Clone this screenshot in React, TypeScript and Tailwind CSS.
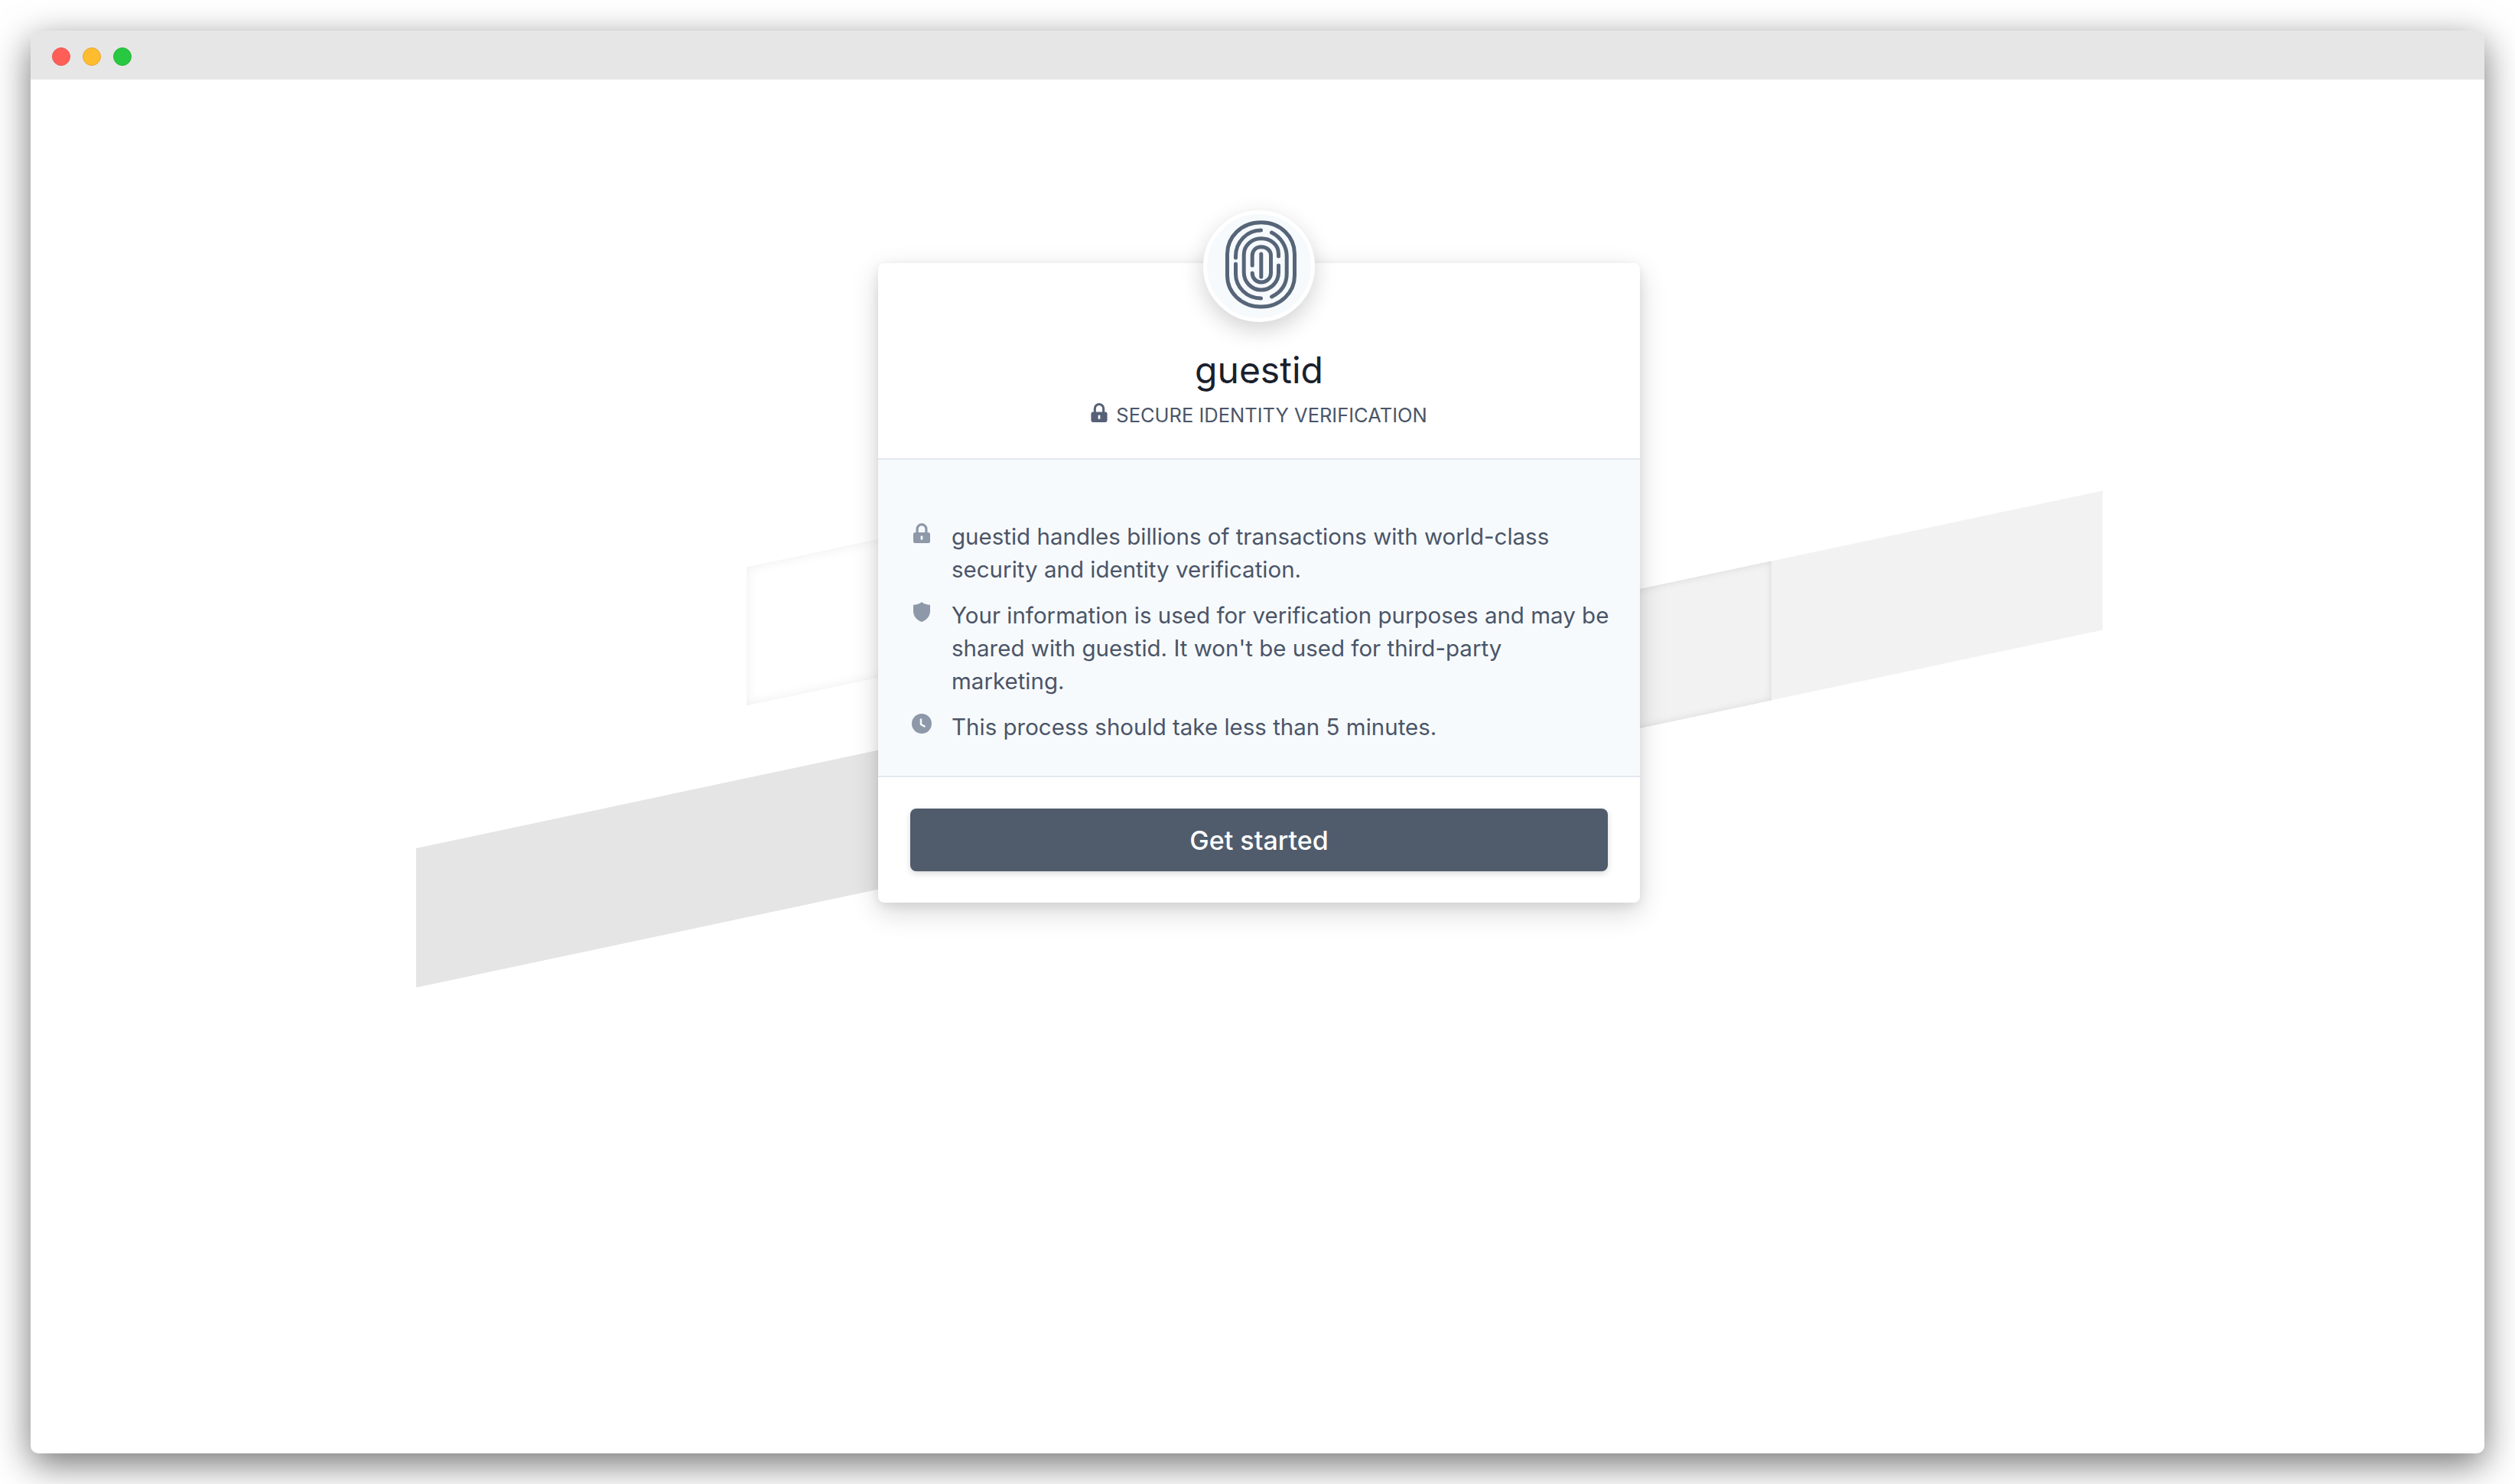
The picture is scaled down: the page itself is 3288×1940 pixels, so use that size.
const notes = [
  { icon: "lock", lines: "guestid handles billions of transactions with world-class security and identity verification." },
  { icon: "shield", lines: "Your information is used for verification purposes and may be shared with guestid. It won't be used for third-party marketing." },
  { icon: "clock", lines: "This process should take less than 5 minutes." },
];

function LockIcon({ className }: { className?: string }) {
  return (
    <svg viewBox="0 0 22 26" className={className} fill="currentColor">
      <path
        fillRule="evenodd"
        d="M3.500 12V7.500a7.500 7.500 0 0 1 15 0V12h1a2.500 2.500 0 0 1 2.500 2.500v9a2.500 2.500 0 0 1-2.500 2.500h-17A2.500 2.500 0 0 1 0 23.500v-9A2.500 2.500 0 0 1 2.500 12h1zm3.200 0h8.600V7.500a4.300 4.300 0 0 0-8.600 0V12zM9.600 16.500v5h2.800v-5H9.600z"
      />
    </svg>
  );
}

function ShieldIcon({ className }: { className?: string }) {
  return (
    <svg viewBox="0 0 22 26" className={className} fill="currentColor">
      <path d="M11 0C14 2.600 18 3.600 22 3.800V12c0 6.500-4.500 11.500-11 14C4.500 23.500 0 18.500 0 12V3.800C4 3.600 8 2.600 11 0z" />
    </svg>
  );
}

function ClockIcon({ className }: { className?: string }) {
  return (
    <svg viewBox="0 0 26 26" className={className}>
      <circle cx="13" cy="13" r="13" fill="currentColor" />
      <path d="M12 6.500V14l5.500 3" fill="none" stroke="#f7fafc" strokeWidth="2.400" />
    </svg>
  );
}

function Fingerprint() {
  return (
    <svg viewBox="-1.500 3 115 130" className="h-[130px] w-[115px]" fill="none" stroke="#566578" strokeWidth="5" strokeLinecap="round">
      <path d="M58.300 10.700C84 10.700 102 30 102 52V80C102 102 84 121 58.300 121C32 121 14 102 14 80V52C14 30 32 10.700 58.300 10.700Z" />
      <path d="M58 21C40 21 25 36 25 55V57" />
      <path d="M25 65V78C25 96 40 110 58 110" />
      <path d="M72 24C84 30 91.700 42 91.700 55V78C91.700 92 84 102 72 108" />
      <path d="M81 55V52C81 40 71 31.700 58.300 31.700C46 31.700 35.700 41 35.700 53V76C35.700 89 46 99 58.300 99C71 99 81 89 81 76V67" />
      <path d="M46.700 67V54C46.700 47 52 42.700 58.300 42.700C65 42.700 71 47 71 54V77C71 84 65 89 58.300 89C52 89 46.700 84 46.700 77" />
      <path d="M58.300 52V82" />
    </svg>
  );
}

export default function App() {
  return (
    <div className="min-h-[1940px] bg-white p-10 font-['Inter',sans-serif]">
      <div className="flex h-[1860px] flex-col overflow-hidden rounded-[10px] bg-white shadow-[0_14px_48px_rgba(0,0,0,0.55)]">
        {/* title bar */}
        <div className="flex h-16 shrink-0 items-center gap-4 bg-[#e6e6e6] pt-[4px] pl-[28px]">
          <span className="h-6 w-6 rounded-full border border-[#e8595a] bg-[#ff5f57]" />
          <span className="h-6 w-6 rounded-full border border-[#e5a93a] bg-[#febc2e]" />
          <span className="h-6 w-6 rounded-full border border-[#25b53c] bg-[#28c840]" />
        </div>

        <div className="relative flex-1 overflow-hidden">
          {/* skewed background bands */}
          <div className="absolute left-[504px] top-[914px] h-[182px] w-[856px] -skew-y-12 bg-[#e5e5e5]" />
          <div className="absolute left-[1960px] top-[617px] h-[182px] w-[749px] -skew-y-12 bg-[#f2f2f2]" />
          <div className="absolute left-[1960px] top-[663px] h-[182px] w-[316px] -skew-y-12 bg-[#f2f2f2] shadow-[inset_0_0_10px_rgba(0,0,0,0.1)]" />
          <div className="absolute left-[936px] top-[603px] h-[181px] w-[324px] -skew-y-12 bg-white shadow-[inset_0_0_16px_rgba(0,0,0,0.07)]" />

          <div className="relative mt-[240px] ml-[1108px] flex w-[996px] flex-col rounded-lg bg-white shadow-[0_12px_36px_rgba(0,0,0,0.16),0_4px_14px_rgba(0,0,0,0.08)]">
            <div className="flex h-[257px] flex-col items-center border-b-2 border-[#e2e8f0]">
              <div className="-mt-[69px] flex h-[146px] w-[146px] items-center justify-center rounded-full border-[5px] border-white bg-[#f7fafc] shadow-[0_10px_30px_rgba(0,0,0,0.18)]">
                <Fingerprint />
              </div>
              <h1 className="mt-[33px] text-[48px] leading-[60px] font-normal text-[#1a202c]">guestid</h1>
              <div className="mt-[11px] flex h-9 items-center gap-[11px] text-[25.500px] text-[#4a5568]">
                <LockIcon className="mb-[7px] h-[25px] w-[22px] text-[#566178]" />
                <span>SECURE IDENTITY VERIFICATION</span>
              </div>
            </div>

            <div className="flex flex-col gap-[17px] border-b-2 border-[#e2e8f0] bg-[#f7fafc] pt-[79px] pr-[30px] pb-[42px] pl-[46px] text-[29.500px] leading-[43px] text-[#4a5568]">
              {notes.map((n) => (
                <div key={n.icon} className="flex">
                  <div className="mt-[4px] flex h-[26px] w-[22px] shrink-0 items-center justify-center text-[#8d98a9]">
                    {n.icon === "lock" && <LockIcon className="h-[26px] w-[22px] shrink-0" />}
                    {n.icon === "shield" && <ShieldIcon className="h-[26px] w-[22px] shrink-0" />}
                    {n.icon === "clock" && <ClockIcon className="h-[26px] w-[26px] shrink-0" />}
                  </div>
                  <p className="ml-[28px]">{n.lines}</p>
                </div>
              ))}
            </div>

            <div className="px-[42px] py-[41px]">
              <button className="h-[82px] w-full rounded-lg bg-[#505c6c] text-[34px] font-medium text-white shadow-[0_3px_8px_rgba(0,0,0,0.15)]">
                Get started
              </button>
            </div>
          </div>
        </div>
      </div>
    </div>
  );
}
